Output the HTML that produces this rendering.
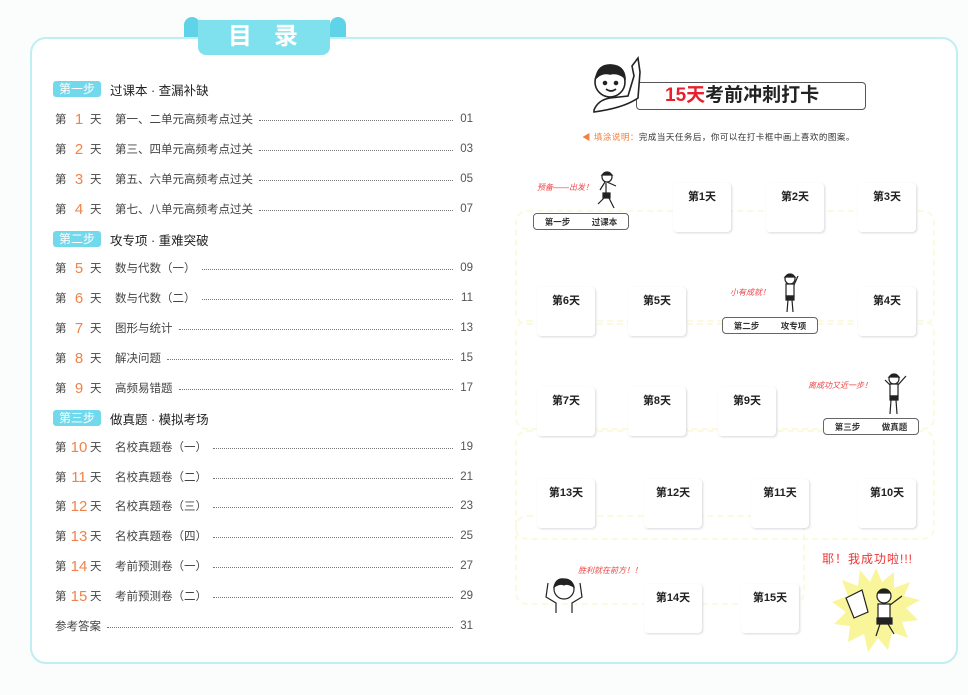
<!DOCTYPE html>
<html><head><meta charset="utf-8"><style>
*{margin:0;padding:0;box-sizing:border-box}
body{width:968px;height:695px;background:#fbfcfc;position:relative;overflow:hidden;font-family:"Liberation Sans","Noto Sans CJK SC",sans-serif;color:#333}
.frame{position:absolute;left:30px;top:37px;width:928px;height:627px;border:2px solid #bfeef3;border-radius:16px;background:#fff}
.tab{position:absolute;left:198px;top:20px;width:132px;height:35px;background:#7fe0ee;border-radius:0 0 8px 8px;color:#fff;font-size:24px;font-weight:bold;text-align:center;line-height:34px;letter-spacing:22px;padding-left:20px}
.curl{position:absolute;top:17px;width:16px;height:20px;background:#5fd3e8;border-radius:8px 8px 0 0}
.row{position:absolute;left:55px;width:418px;height:18px;display:flex;align-items:center;font-size:11.5px;color:#444}
.row .d{width:13px}
.row .n{color:#f0834a;font-size:15px;width:22px;text-align:center}
.row .t{width:25px;text-align:left}
.row .dots{flex:1;border-bottom:1.5px dotted #777;margin:0 6px;height:1px;margin-top:2px}
.row .p{width:14px;text-align:right;color:#555}
.hd{position:absolute;left:53px;height:18px;display:flex;align-items:center;font-size:12.5px;color:#222}
.hd b{background:#72d9ec;color:#fff;font-weight:normal;padding:0 6px;border-radius:3px;height:16px;line-height:16px;margin-right:9px;font-size:12px}
.box{position:absolute;width:58px;height:49px;border-radius:4px;box-shadow:1px 1px 2px rgba(200,200,210,.7);background:#fff;font-size:11px;font-weight:bold;text-align:center;padding-top:5px;color:#222}
.step{position:absolute;width:96px;height:17px;border:1px solid #666;border-radius:4px;font-size:8.5px;display:flex;justify-content:space-around;align-items:center;background:#fff;font-weight:bold}
.path{position:absolute;border:2px dashed #fbfadf;border-radius:12px}
.red{position:absolute;color:#e44;font-size:8px;font-style:italic}
</style></head><body>
<div class="frame"></div>
<div class="curl" style="left:184px"></div>
<div class="curl" style="left:330px"></div>
<div class="tab">目录</div>

<div class="hd" style="top:80px"><b>第一步</b>过课本 · 查漏补缺</div>
<div class="row" style="top:110px"><span class="d">第</span><span class="n">1</span><span class="t">天</span><span>第一、二单元高频考点过关</span><span class="dots"></span><span class="p">01</span></div>
<div class="row" style="top:140px"><span class="d">第</span><span class="n">2</span><span class="t">天</span><span>第三、四单元高频考点过关</span><span class="dots"></span><span class="p">03</span></div>
<div class="row" style="top:170px"><span class="d">第</span><span class="n">3</span><span class="t">天</span><span>第五、六单元高频考点过关</span><span class="dots"></span><span class="p">05</span></div>
<div class="row" style="top:200px"><span class="d">第</span><span class="n">4</span><span class="t">天</span><span>第七、八单元高频考点过关</span><span class="dots"></span><span class="p">07</span></div>
<div class="hd" style="top:230px"><b>第二步</b>攻专项 · 重难突破</div>
<div class="row" style="top:259px"><span class="d">第</span><span class="n">5</span><span class="t">天</span><span>数与代数（一）</span><span class="dots"></span><span class="p">09</span></div>
<div class="row" style="top:289px"><span class="d">第</span><span class="n">6</span><span class="t">天</span><span>数与代数（二）</span><span class="dots"></span><span class="p">11</span></div>
<div class="row" style="top:319px"><span class="d">第</span><span class="n">7</span><span class="t">天</span><span>图形与统计</span><span class="dots"></span><span class="p">13</span></div>
<div class="row" style="top:349px"><span class="d">第</span><span class="n">8</span><span class="t">天</span><span>解决问题</span><span class="dots"></span><span class="p">15</span></div>
<div class="row" style="top:379px"><span class="d">第</span><span class="n">9</span><span class="t">天</span><span>高频易错题</span><span class="dots"></span><span class="p">17</span></div>
<div class="hd" style="top:409px"><b>第三步</b>做真题 · 模拟考场</div>
<div class="row" style="top:438px"><span class="d">第</span><span class="n">10</span><span class="t">天</span><span>名校真题卷（一）</span><span class="dots"></span><span class="p">19</span></div>
<div class="row" style="top:468px"><span class="d">第</span><span class="n">11</span><span class="t">天</span><span>名校真题卷（二）</span><span class="dots"></span><span class="p">21</span></div>
<div class="row" style="top:497px"><span class="d">第</span><span class="n">12</span><span class="t">天</span><span>名校真题卷（三）</span><span class="dots"></span><span class="p">23</span></div>
<div class="row" style="top:527px"><span class="d">第</span><span class="n">13</span><span class="t">天</span><span>名校真题卷（四）</span><span class="dots"></span><span class="p">25</span></div>
<div class="row" style="top:557px"><span class="d">第</span><span class="n">14</span><span class="t">天</span><span>考前预测卷（一）</span><span class="dots"></span><span class="p">27</span></div>
<div class="row" style="top:587px"><span class="d">第</span><span class="n">15</span><span class="t">天</span><span>考前预测卷（二）</span><span class="dots"></span><span class="p">29</span></div>
<div class="row" style="top:617px"><span>参考答案</span><span class="dots"></span><span class="p">31</span></div>

<div style="position:absolute;left:636px;top:82px;width:230px;height:28px;border:1.5px solid #555;border-radius:4px;font-size:19px;font-weight:bold;line-height:26px;padding-left:28px;color:#222"><span style="color:#e8202e">15天</span>考前冲刺打卡</div>
<svg style="position:absolute;left:588px;top:52px" width="60" height="64" viewBox="0 0 60 64" fill="#fff" stroke="#222" stroke-width="1.6">
<path d="M6 58 Q10 48 22 46 L40 44 L46 24 L44 14 L50 6 L52 20 L50 46 Q36 56 6 60Z"/>
<circle cx="22" cy="30" r="15"/>
<path d="M8 26 Q10 12 24 13 Q36 14 37 26 Q30 20 22 22 Q14 20 8 26Z" fill="#222"/>
<circle cx="17" cy="31" r="1.5" fill="#222"/><circle cx="28" cy="31" r="1.5" fill="#222"/>
<path d="M18 37 Q23 41 28 37" fill="#fff"/>
</svg>
<div style="position:absolute;left:582px;top:131px;font-size:8.5px;color:#333;letter-spacing:.5px"><span style="color:#f08040">◀ 填涂说明：</span>完成当天任务后，你可以在打卡框中画上喜欢的图案。</div>

<div class="path" style="left:515px;top:210px;width:420px;height:115px"></div>
<div class="path" style="left:515px;top:320px;width:420px;height:110px"></div>
<div class="path" style="left:515px;top:430px;width:420px;height:110px"></div>
<div class="path" style="left:515px;top:515px;width:290px;height:90px"></div>

<div class="box" style="left:673px;top:183px">第1天</div>
<div class="box" style="left:766px;top:183px">第2天</div>
<div class="box" style="left:858px;top:183px">第3天</div>
<div class="box" style="left:537px;top:287px">第6天</div>
<div class="box" style="left:628px;top:287px">第5天</div>
<div class="box" style="left:858px;top:287px">第4天</div>
<div class="box" style="left:537px;top:387px">第7天</div>
<div class="box" style="left:628px;top:387px">第8天</div>
<div class="box" style="left:718px;top:387px">第9天</div>
<div class="box" style="left:537px;top:479px">第13天</div>
<div class="box" style="left:644px;top:479px">第12天</div>
<div class="box" style="left:751px;top:479px">第11天</div>
<div class="box" style="left:858px;top:479px">第10天</div>
<div class="box" style="left:644px;top:584px">第14天</div>
<div class="box" style="left:741px;top:584px">第15天</div>

<div class="step" style="left:533px;top:213px"><span>第一步</span><span>过课本</span></div>
<div class="step" style="left:722px;top:317px"><span>第二步</span><span>攻专项</span></div>
<div class="step" style="left:823px;top:418px"><span>第三步</span><span>做真题</span></div>

<div class="red" style="left:537px;top:182px">预备——出发！</div>
<div class="red" style="left:730px;top:287px">小有成就！</div>
<div class="red" style="left:808px;top:380px">离成功又近一步！</div>
<div class="red" style="left:578px;top:565px">胜利就在前方！！</div>
<div style="position:absolute;left:822px;top:550px;color:#e33;font-size:12px;letter-spacing:1px">耶！我成功啦!!!</div>

<svg style="position:absolute;left:590px;top:170px" width="35" height="45" viewBox="0 0 35 45" fill="#fff" stroke="#222" stroke-width="1.2"><circle cx="17" cy="7" r="5"/><path d="M12 5 Q17 0 22 5Z" fill="#222"/><path d="M15 12 L10 20 M17 12 L26 16 M16 13 L16 24"/><path d="M13 23 L20 23 L20 28 L13 28Z" fill="#222"/><path d="M14 28 L8 34 M19 28 L24 38"/></svg>
<svg style="position:absolute;left:778px;top:272px" width="25" height="45" viewBox="0 0 25 45" fill="#fff" stroke="#222" stroke-width="1.2"><circle cx="12" cy="7" r="5"/><path d="M7 5 Q12 0 17 5Z" fill="#222"/><path d="M8 12 L16 12 L16 24 L8 24Z"/><path d="M8 24 L16 24 L16 28 L8 28Z" fill="#222"/><path d="M10 28 L9 40 M14 28 L15 40 M16 13 L20 4"/></svg>
<svg style="position:absolute;left:880px;top:372px" width="30" height="46" viewBox="0 0 30 46" fill="#fff" stroke="#222" stroke-width="1.2"><circle cx="14" cy="7" r="5"/><path d="M9 5 Q14 0 19 5Z" fill="#222"/><path d="M10 12 L18 12 L18 24 L10 24Z M18 13 L26 4 M10 13 L5 8"/><path d="M10 24 L18 24 L18 28 L10 28Z" fill="#222"/><path d="M11 28 L10 42 M16 28 L17 42"/></svg>
<svg style="position:absolute;left:542px;top:575px" width="44" height="38" viewBox="0 0 44 38" fill="#fff" stroke="#222" stroke-width="1.2"><circle cx="22" cy="14" r="10"/><path d="M12 12 Q14 3 22 4 Q30 4 32 12 Q25 8 22 10 Q18 8 12 12Z" fill="#222"/><path d="M6 8 L4 22 L14 28 L14 38 M38 8 L40 22 L30 28 L30 38"/></svg>
<svg style="position:absolute;left:832px;top:568px" width="88" height="84" viewBox="0 0 88 84"><polygon fill="#f8f59a" points="44,0 50,14 62,4 62,20 78,14 72,28 88,32 74,40 86,52 70,54 76,70 60,64 56,82 46,70 36,84 32,66 16,74 18,58 2,56 14,44 0,34 16,28 10,12 26,18 28,2 38,14"/><g fill="#fff" stroke="#222" stroke-width="1.2"><path d="M14 30 L30 22 L36 44 L22 50Z"/><circle cx="52" cy="28" r="7"/><path d="M46 25 Q52 18 58 25Z" fill="#222"/><path d="M46 36 L58 36 L58 50 L46 50Z"/><path d="M45 50 L60 50 L60 56 L45 56Z" fill="#222"/><path d="M48 56 L44 68 M56 56 L62 66 M58 37 L70 28"/></g></svg>
</body></html>
